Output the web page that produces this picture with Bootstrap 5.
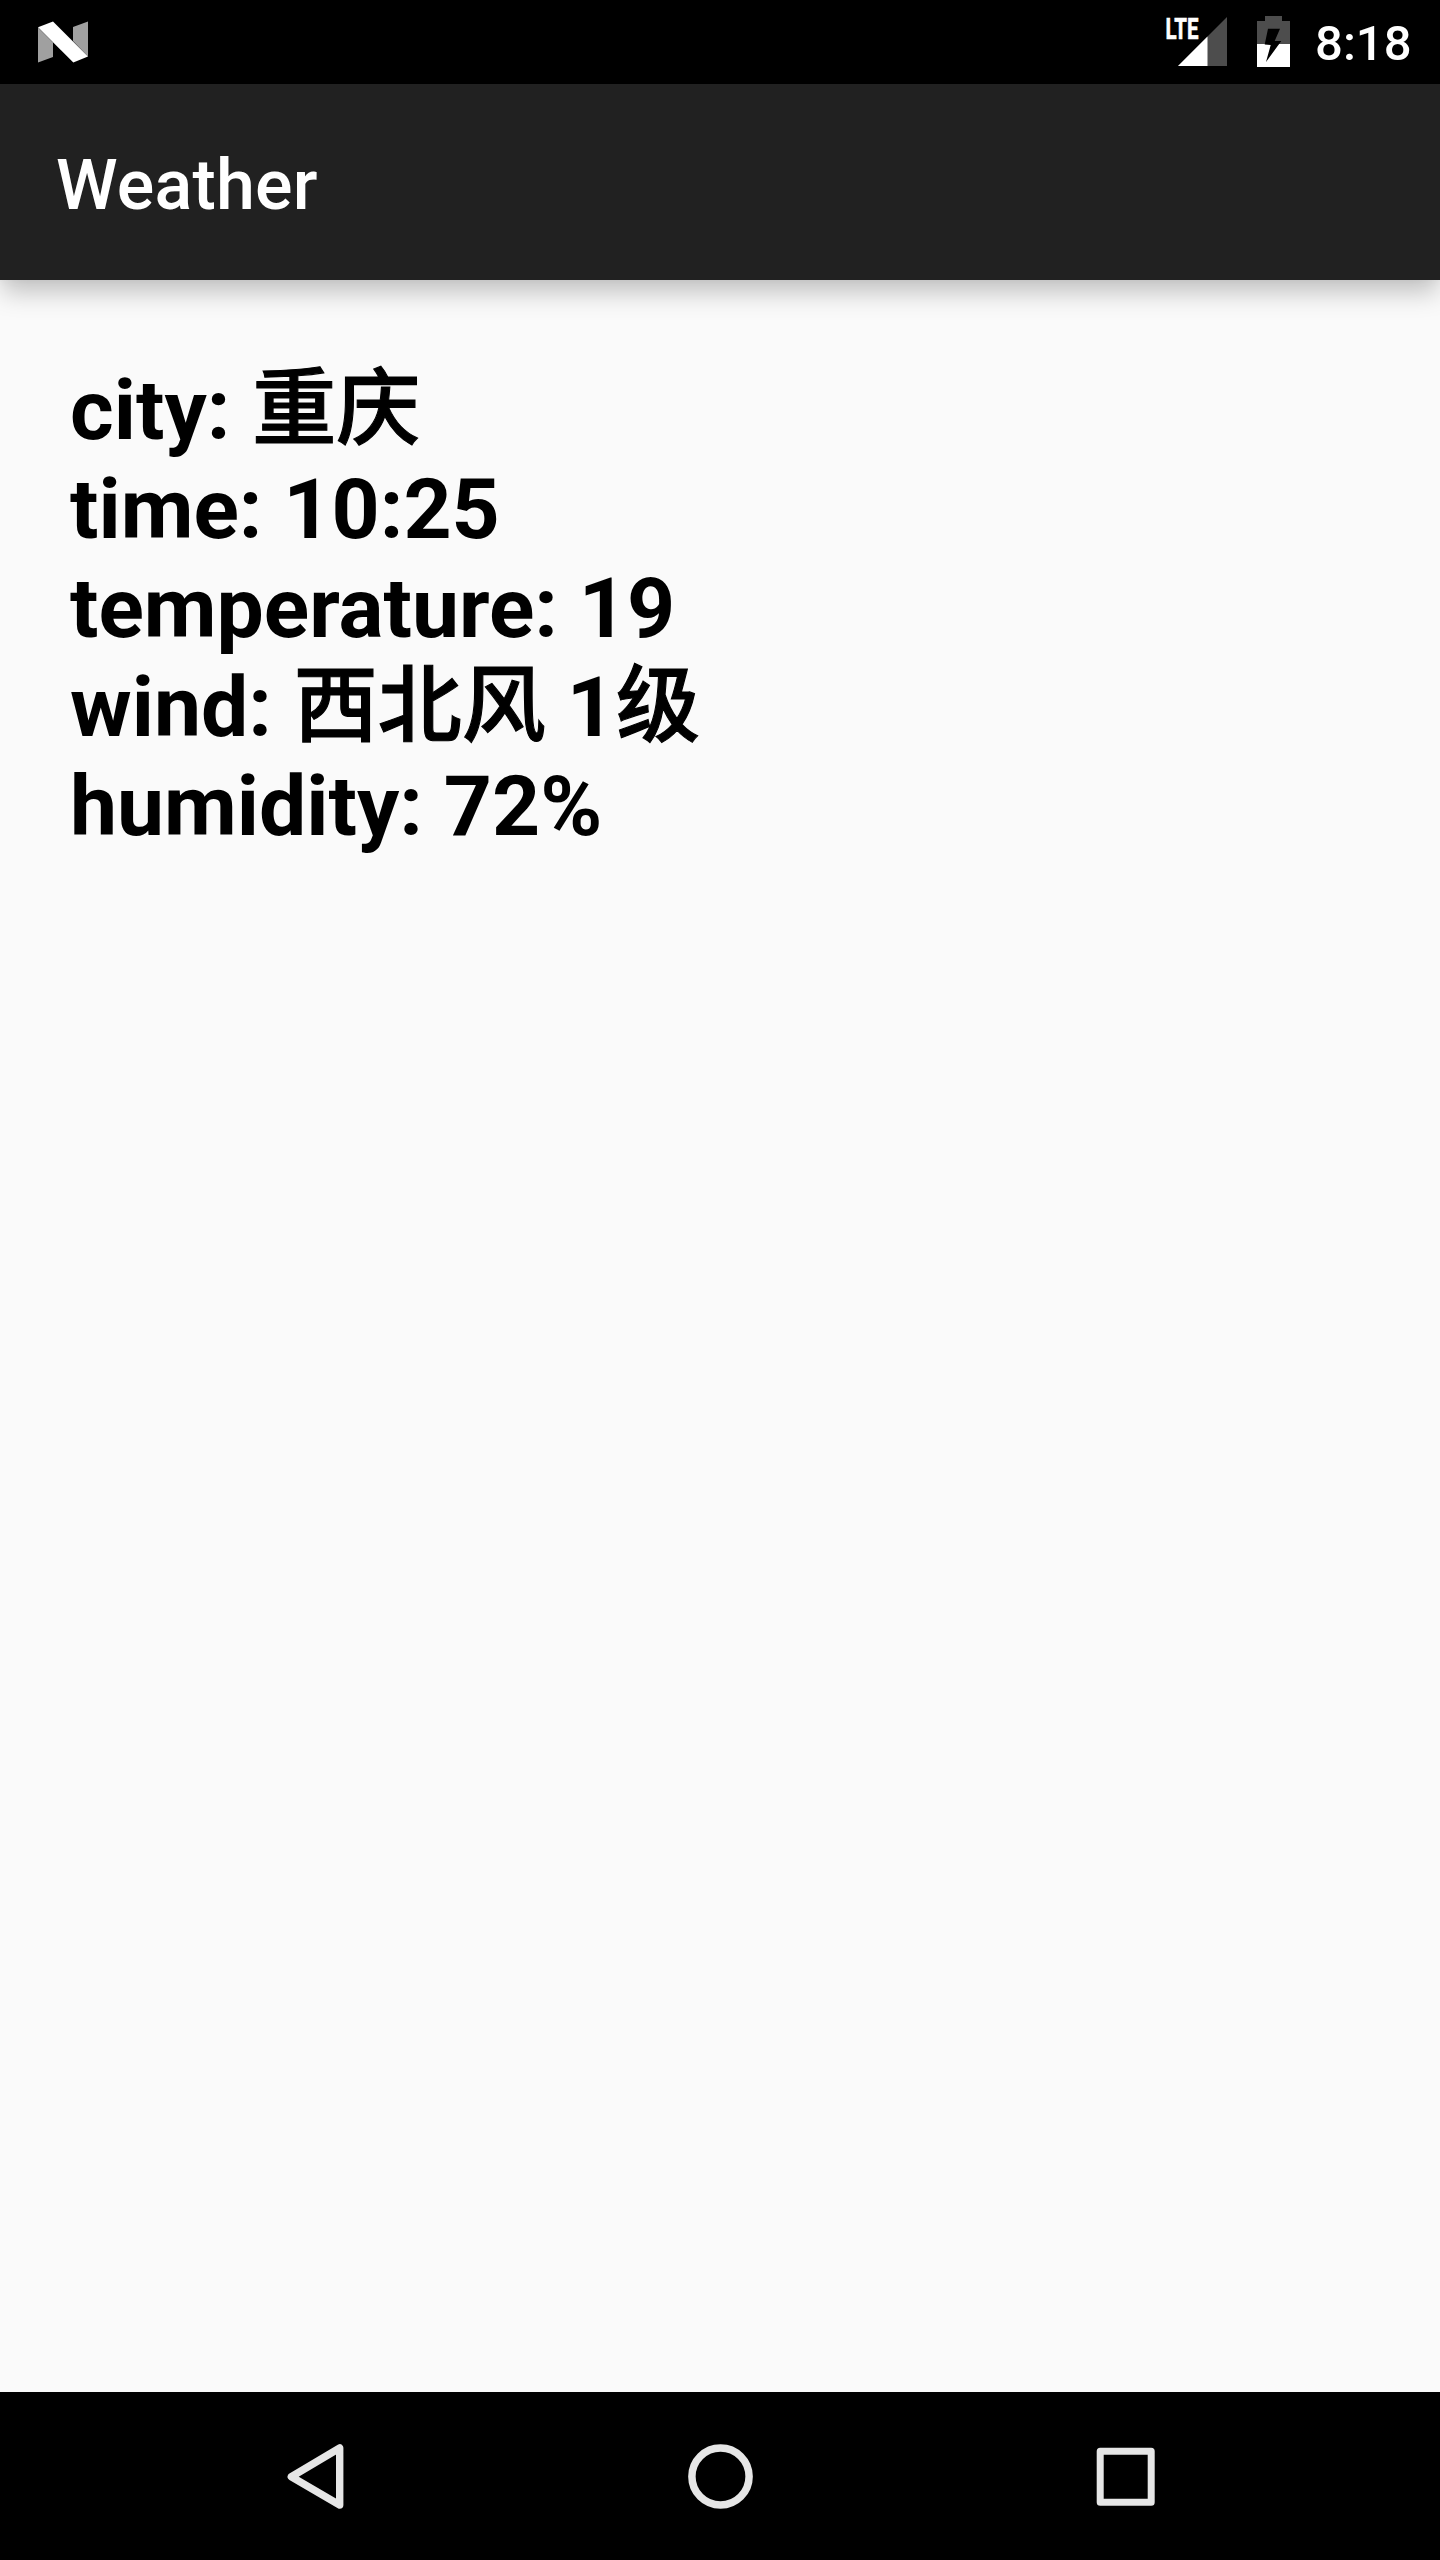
<!DOCTYPE html>
<html lang="en">
<head>
<meta charset="utf-8">
<meta name="viewport" content="width=device-width, initial-scale=1">
<title>Weather</title>
<link href="https://cdn.jsdelivr.net/npm/bootstrap@5.3.0/dist/css/bootstrap.min.css" rel="stylesheet">
<style>
body { font-family: Roboto, "Noto Sans CJK SC", sans-serif; background: #fafafa; }
.screen { height: 2560px; overflow: hidden; }
.status-bar { height: 84px; background: #000; padding: 0 28.5px 0 38px; }
.status-bar svg { display: block; }
.clock { font-size: 49px; font-weight: 500; line-height: 58px; padding-top: 4px; margin-left: 25px; }
.network { width: 72px; height: 84px; margin-right: 20px; }
.network-label { font: 700 29px Roboto, sans-serif; stroke: #fff; stroke-width: .6px; }
.app-bar { height: 196px; background: #212121; padding: 6px 56px 0; box-shadow: 0 14px 24px -2px rgba(0,0,0,.23), 0 0 10px rgba(0,0,0,.04); z-index: 1; }
.app-title { font-size: 70px; font-weight: 500; line-height: 82px; letter-spacing: .2px; color: #fff; }
.report { padding: 81px 70px 0; font-size: 84px; line-height: 99px; color: #000; }
.han { font-family: "Noto Sans CJK SC", sans-serif; font-weight: 500; line-height: 80px; margin-left: 1px; vertical-align: 1px; -webkit-text-stroke: 1.1px #000; }
.nav-keys { height: 168px; background: #000; }
.nav-key { width: 405px; }
</style>
</head>
<body>
<div class="screen d-flex flex-column">
  <header class="status-bar d-flex align-items-center text-white flex-shrink-0">
    <svg width="50" height="84" viewBox="38 0 50 84" aria-hidden="true">
      <path fill="#a0a0a0" d="M38 27.5 53 42.5V57L38 62.5ZM73 27 88 21.5V56.5L73 41Z"/>
      <path fill="#fff" d="M38 27.3 53 21.5 88 56.5 73.3 62.5Z"/>
    </svg>
    <div class="d-flex align-items-center ms-auto">
      <svg class="network" viewBox="1165 0 72 84" overflow="visible">
        <path fill="#4d4d4d" d="M1178 66 1227 17V66Z"/>
        <path fill="#fff" d="M1178 66 1207.5 36.5V66Z"/>
        <text class="network-label" x="1165.5" y="39" fill="#fff" textLength="33" lengthAdjust="spacingAndGlyphs">LTE</text>
      </svg>
      <svg width="33" height="84" viewBox="1257 0 33 84" aria-hidden="true">
        <path fill="#4d4d4d" d="M1265 16H1282V21H1290V44H1257V21H1265Z"/>
        <path fill="#fff" d="M1257 44H1290V67H1257Z"/>
        <path d="M1268 28.7H1280L1274.7 41H1281.3L1266 62 1270.7 45 1264.7 44.5Z"/>
      </svg>
      <span class="clock">8:18</span>
    </div>
  </header>
  <div class="app-bar d-flex align-items-center position-relative flex-shrink-0">
    <h1 class="app-title m-0">Weather</h1>
  </div>
  <main class="report flex-grow-1 fw-bold">
    <div>city: <span class="han">重庆</span></div>
    <div>time: 10:25</div>
    <div>temperature: 19</div>
    <div>wind: <span class="han">西北风</span> 1<span class="han">级</span></div>
    <div>humidity: 72%</div>
  </main>
  <footer class="nav-keys d-flex justify-content-center align-items-center flex-shrink-0">
    <div class="nav-key d-flex justify-content-center">
      <svg width="100" height="100" viewBox="265 2426 100 100" fill="none" stroke="#e6e6e6" stroke-width="7.4" stroke-linejoin="round"><path d="M291.3 2476.7 339.7 2448V2505Z"/></svg>
    </div>
    <div class="nav-key d-flex justify-content-center">
      <svg width="100" height="100" viewBox="670 2426 100 100" fill="none" stroke="#e6e6e6" stroke-width="7.5"><circle cx="720.5" cy="2476.5" r="28.6"/></svg>
    </div>
    <div class="nav-key d-flex justify-content-center">
      <svg width="100" height="100" viewBox="1075 2426 100 100" fill="none" stroke="#e6e6e6" stroke-width="7" stroke-linejoin="round"><path d="M1100.2 2451.2H1151.2V2502.2H1100.2Z"/></svg>
    </div>
  </footer>
</div>
<script src="https://cdn.jsdelivr.net/npm/bootstrap@5.3.0/dist/js/bootstrap.bundle.min.js"></script>
</body>
</html>
